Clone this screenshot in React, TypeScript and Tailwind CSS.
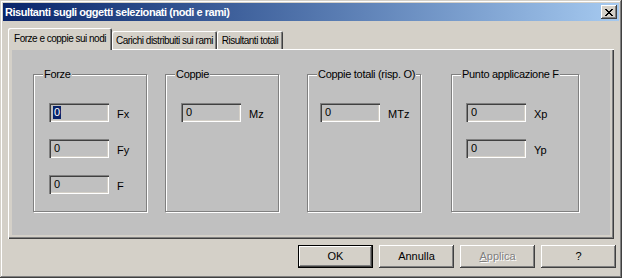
import type { ReactNode } from 'react';

type Field = { label: string; selected?: boolean };
type Group = { title: string; width: string; gap: string; editLeft: string; labelGap: string; fields: Field[] };

const GROUPS: Group[] = [
  { title: 'Forze', width: 'w-[114px]', gap: 'ml-0', editLeft: 'pl-[15px]', labelGap: 'ml-[8px]', fields: [{ label: 'Fx', selected: true }, { label: 'Fy' }, { label: 'F' }] },
  { title: 'Coppie', width: 'w-[114px]', gap: 'ml-[18px]', editLeft: 'pl-[15px]', labelGap: 'ml-[8px]', fields: [{ label: 'Mz' }] },
  { title: 'Coppie totali (risp. O)', width: 'w-[114px]', gap: 'ml-[28px]', editLeft: 'pl-[12px]', labelGap: 'ml-[8px]', fields: [{ label: 'MTz' }] },
  { title: 'Punto applicazione F', width: 'w-[128px]', gap: 'ml-[30px]', editLeft: 'pl-[14px]', labelGap: 'ml-[8px]', fields: [{ label: 'Xp' }, { label: 'Yp' }] },
];

const raised =
  'shadow-[inset_-1px_-1px_#404040,inset_1px_1px_#ffffff,inset_-2px_-2px_#808080,inset_2px_2px_#d4d0c8]';

const tabEdge =
  'bg-[#d4d0c8] flex items-center justify-center whitespace-nowrap rounded-tl-[2px] rounded-tr-[2px] shadow-[inset_1px_1px_#ffffff,inset_-1px_0_#404040,inset_-2px_0_#808080] tracking-[-0.5px] text-[10px]';

function Edit({ selected }: { selected?: boolean }) {
  return (
    <div className="w-[60px] h-[19px] bg-[#c0c0c0] flex items-center pl-[4px] shadow-[inset_1px_1px_#808080,inset_2px_2px_#404040,inset_-1px_-1px_#ffffff,inset_-2px_-2px_#d4d0c8]">
      {selected ? (
        <span className="bg-[#0a246a] text-white leading-[13px] px-[1px]">0</span>
      ) : (
        <span className="leading-[13px] px-[1px]">0</span>
      )}
    </div>
  );
}

function GroupBox({ group }: { group: Group }) {
  return (
    <div
      className={`relative h-[138px] ${group.width} ${group.gap} border border-[#808080] shadow-[inset_1px_1px_#ffffff,1px_1px_#ffffff] ${group.editLeft} pt-[28px] flex flex-col gap-[17px]`}
    >
      <span className="absolute top-[-7px] left-[9px] px-[1px] bg-[#c0c0c0] leading-[13px] tracking-[-0.3px] whitespace-nowrap">
        {group.title}
      </span>
      {group.fields.map((f) => (
        <div key={f.label} className="flex items-center">
          <Edit selected={f.selected} />
          <span className={`${group.labelGap} pt-[4px] leading-[13px]`}>{f.label}</span>
        </div>
      ))}
    </div>
  );
}

function Button({ children, isDefault, disabled }: { children: ReactNode; isDefault?: boolean; disabled?: boolean }) {
  if (isDefault) {
    return (
      <div className="w-[75px] h-[23px] border border-black">
        <div className={`w-full h-full bg-[#d4d0c8] flex items-center justify-center ${raised}`}>{children}</div>
      </div>
    );
  }
  return (
    <div
      className={`w-[75px] h-[23px] bg-[#d4d0c8] flex items-center justify-center ${raised} ${
        disabled ? 'text-[#808080] [text-shadow:1px_1px_#ffffff]' : ''
      }`}
    >
      {children}
    </div>
  );
}

export default function App() {
  return (
    <div className="w-[622px] h-[278px] bg-[#d4d0c8] p-[3px] flex flex-col font-['Liberation_Sans',Arial,sans-serif] text-[11px] text-black shadow-[inset_-1px_-1px_#404040,inset_1px_1px_#d4d0c8,inset_-2px_-2px_#808080,inset_2px_2px_#ffffff]">
      {/* title bar */}
      <div className="h-[18px] flex items-center bg-gradient-to-r from-[#0a246a] to-[#a6caf0] pl-[2px] pr-[2px]">
        <span className="flex-1 text-white font-bold text-[11px] leading-none tracking-[-0.45px]">
          Risultanti sugli oggetti selezionati (nodi e rami)
        </span>
        <div className={`w-[16px] h-[14px] bg-[#d4d0c8] flex items-center justify-center ${raised}`}>
          <svg width="8" height="7" viewBox="0 0 8 7" shapeRendering="crispEdges">
            <path d="M0 0h2v1h-2zM6 0h2v1h-2zM1 1h2v1h-2zM5 1h2v1h-2zM2 2h4v1h-4zM3 3h2v1h-2zM2 4h4v1h-4zM1 5h2v1h-2zM5 5h2v1h-2zM0 6h2v1h-2zM6 6h2v1h-2z" fill="#000" />
          </svg>
        </div>
      </div>

      {/* tabs */}
      <div className="relative z-10 mt-[7px] ml-[5px] h-[22px] flex items-end">
        <div className={`w-[104px] h-[22px] pb-[2px] ${tabEdge}`}>Forze e coppie sui nodi</div>
        <div className={`w-[105px] h-[18px] mb-[1px] ${tabEdge}`}>Carichi distribuiti sui rami</div>
        <div className={`w-[66px] h-[18px] mb-[1px] ${tabEdge}`}>Risultanti totali</div>
      </div>

      {/* tab panel */}
      <div className="-mt-[1px] mx-[5px] h-[190px] flex pl-[4px] pt-[1px] pr-[4px] pb-[4px] shadow-[inset_1px_1px_#ffffff,inset_-1px_-1px_#404040,inset_-2px_-2px_#808080]">
        <div className="flex-1 bg-[#c0c0c0] flex items-start pl-[21px] pt-[24px]">
          {GROUPS.map((g) => (
            <GroupBox key={g.title} group={g} />
          ))}
        </div>
      </div>

      {/* buttons */}
      <div className="mt-[6px] mr-[3px] flex justify-end gap-[6px]">
        <Button isDefault>OK</Button>
        <Button>Annulla</Button>
        <Button disabled>
          <span>
            <span className="underline">A</span>pplica
          </span>
        </Button>
        <Button>?</Button>
      </div>
    </div>
  );
}
